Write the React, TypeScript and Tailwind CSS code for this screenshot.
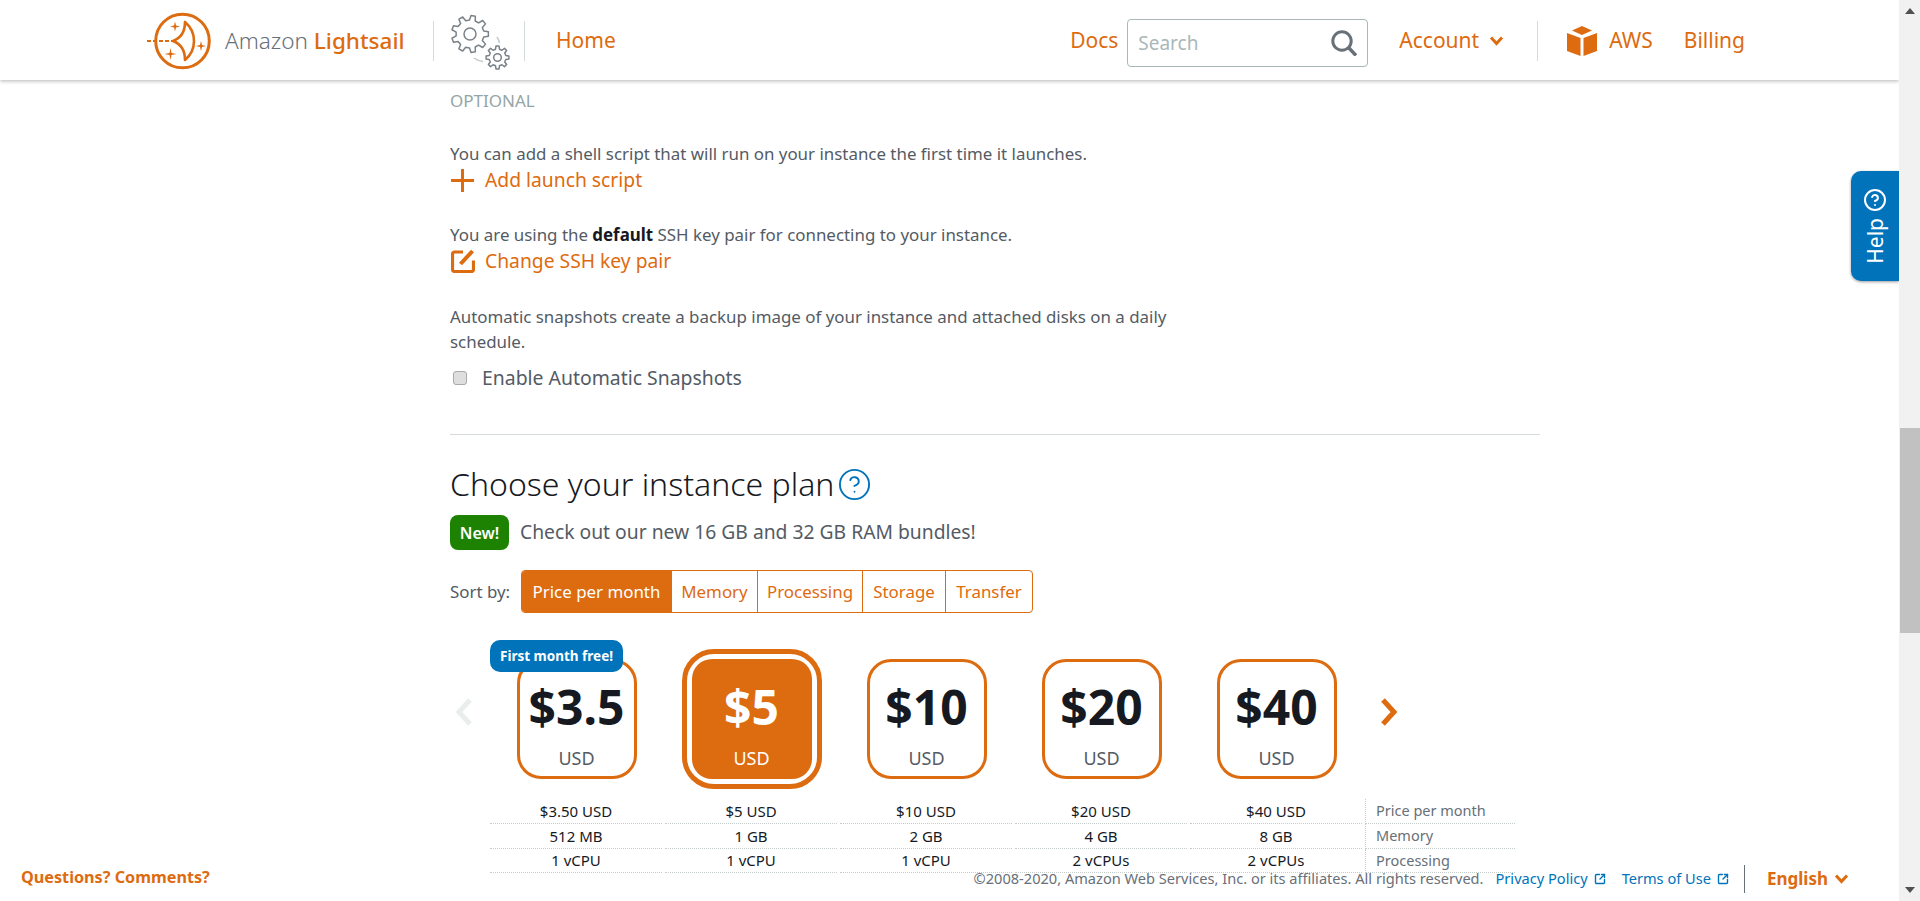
import { SquareArrowOutUpRight, CircleHelp } from 'lucide-react'

const sortTabs = [
  { label: 'Price per month', width: 'w-[150px]', active: true },
  { label: 'Memory', width: 'w-[86px]' },
  { label: 'Processing', width: 'w-[105px]' },
  { label: 'Storage', width: 'w-[83px]' },
  { label: 'Transfer', width: 'w-[86px]' },
]

const plans = [
  { price: '$3.5', monthly: '$3.50 USD', memory: '512 MB', cpu: '1 vCPU', badge: true },
  { price: '$5', monthly: '$5 USD', memory: '1 GB', cpu: '1 vCPU', selected: true },
  { price: '$10', monthly: '$10 USD', memory: '2 GB', cpu: '1 vCPU' },
  { price: '$20', monthly: '$20 USD', memory: '4 GB', cpu: '2 vCPUs' },
  { price: '$40', monthly: '$40 USD', memory: '8 GB', cpu: '2 vCPUs' },
]

// builds the outline of a cog, teeth are squared off
function gearPath(cx: number, cy: number, outer: number, inner: number, teeth: number) {
  const pts: string[] = []
  for (let i = 0; i < teeth; i++) {
    const step = (Math.PI * 2) / teeth
    const a = i * step
    const corners: [number, number][] = [
      [inner, a - step * 0.3],
      [outer, a - step * 0.17],
      [outer, a + step * 0.17],
      [inner, a + step * 0.3],
    ]
    corners.forEach(([r, t]) => {
      pts.push(`${(cx + r * Math.cos(t)).toFixed(2)} ${(cy + r * Math.sin(t)).toFixed(2)}`)
    })
  }
  return `M${pts.join('L')}Z`
}

const sparkle = (x: number, y: number, r: number) =>
  `M${x} ${y - r}L${x + 1} ${y - 1}L${x + r} ${y}L${x + 1} ${y + 1}L${x} ${y + r}L${x - 1} ${y + 1}L${x - r} ${y}L${x - 1} ${y - 1}Z`

function Logo() {
  return (
    <svg className="h-[60px] w-[66px] shrink-0" viewBox="0 0 66 60" fill="none" stroke="#dd6b10">
      <circle cx="35.500" cy="30" r="26.800" strokeWidth="3" />
      <path d="M0 30h26" strokeWidth="2" strokeDasharray="4 2" />
      <path d="M38 11C38 20 34 27 26 30C34 33 38 40 38 49C44 44 47 37 47 30C47 23 44 16 38 11Z" strokeWidth="2.600" strokeLinejoin="round" />
      <path d={sparkle(28, 15.500, 5)} fill="#dd6b10" stroke="none" />
      <path d={sparkle(54, 35, 5)} fill="#dd6b10" stroke="none" />
      <path d={sparkle(23.500, 43, 6)} fill="#dd6b10" stroke="none" />
    </svg>
  )
}

function Gears() {
  return (
    <svg className="h-[60px] w-[62px] shrink-0" viewBox="0 0 62 60" fill="none" stroke="#7a8288" strokeWidth="1.500" strokeLinejoin="round">
      <path d={gearPath(20, 23, 18.500, 14, 9)} />
      <circle cx="20" cy="23" r="6" />
      <path d={gearPath(47.500, 46.500, 11.500, 8.500, 8)} fill="#fff" />
      <circle cx="47.500" cy="46.500" r="3.800" />
      <path d="M24 47q4 3 9 3.500" stroke="#c4c9c9" />
      <path d="M47 26q2 3 2.500 6" stroke="#c4c9c9" />
    </svg>
  )
}

function Cube() {
  return (
    <svg className="h-[30px] w-[30px] shrink-0" viewBox="0 0 30 30" fill="#dd6b10">
      <path d="M15 0L25 4.500L15 9L5 4.500Z" />
      <path d="M0 7L13.500 12V30L0 25Z" />
      <path d="M30 7L16.500 12V30L30 25Z" />
    </svg>
  )
}

function Divider() {
  return <div className="h-10 w-px shrink-0 bg-[#d5dbdb]" />
}

function Chev({ className }: { className: string }) {
  return (
    <svg className={className} viewBox="0 0 15 10" fill="none" stroke="currentColor" strokeWidth="3">
      <path d="M2 1.500L7.500 7.500L13 1.500" />
    </svg>
  )
}

function PlanCard({ plan }: { plan: (typeof plans)[number] }) {
  return (
    <div className="relative flex h-[140px] w-[175px] shrink-0 items-center justify-center">
      {plan.selected ? (
        <div className="flex h-[140px] w-[140px] items-center justify-center rounded-[32px] border-[5px] border-[#dd6b10]">
          <div className="flex h-[120px] w-[120px] flex-col items-center rounded-[20px] bg-[#dd6b10] text-white">
            <span className="mt-[16px] text-[48px] leading-[64px] font-bold">{plan.price}</span>
            <span className="mt-[7px] text-[18px] leading-6">USD</span>
          </div>
        </div>
      ) : (
        <div className="flex h-[120px] w-[120px] flex-col items-center rounded-[24px] border-[3px] border-[#dd6b10]">
          <span className="mt-[13px] text-[48px] leading-[64px] font-bold text-[#16191f]">{plan.price}</span>
          <span className="mt-[7px] text-[18px] leading-6 text-[#545b64]">USD</span>
        </div>
      )}
      {plan.badge && (
        <div className="absolute top-[-9px] left-[1px] flex h-8 w-[133px] items-center justify-center rounded-[10px] bg-[#0073bb] text-[13.500px] font-bold text-white">
          First month free!
        </div>
      )}
    </div>
  )
}

function SpecRow({ values, label, height }: { values: string[]; label: string; height: string }) {
  return (
    <div className={`flex ${height}`}>
      {values.map((v, i) => (
        <div key={i} className="mr-[3px] flex w-[172px] items-center justify-center border-b border-dotted border-[#c5cccc] text-[15px] text-[#16191f]">
          {v}
        </div>
      ))}
      <div className="flex w-[150px] items-center border-b border-l border-dotted border-[#c5cccc] pl-[10px] text-[14.500px] text-[#687078]">
        {label}
      </div>
    </div>
  )
}

export default function App() {
  return (
    <div className="relative flex h-[901px] w-[1920px] overflow-hidden bg-white font-['Noto_Sans','Open_Sans',sans-serif] text-[16.900px] text-[#545b64]">
      <div className="flex min-w-0 flex-1 flex-col">
        <header className="z-10 flex h-20 shrink-0 items-center bg-white pt-[2px] pr-[154px] pl-[147px] text-[21px] text-[#dd6b10] shadow-[0_1px_4px_rgba(0,0,0,0.3)]">
          <Logo />
          <div className="ml-[12px] w-[178px] text-[22.500px] whitespace-nowrap">
            <span className="font-light text-[#687078]">Amazon </span>
            <span className="font-medium">Lightsail</span>
          </div>
          <div className="ml-[30px]"><Divider /></div>
          <div className="ml-[16px]"><Gears /></div>
          <div className="ml-[12px]"><Divider /></div>
          <span className="ml-[31px]">Home</span>
          <span className="ml-auto">Docs</span>
          <div className="mt-[4px] ml-[9px] flex h-12 w-[241px] items-center justify-between rounded-[4px] border border-[#aab7b8] pr-[10px] pl-[10px] text-[19px] text-[#aab7b8]">
            Search
            <svg className="h-[26px] w-[26px]" viewBox="0 0 26 26" fill="none" stroke="#687078">
              <circle cx="11" cy="11" r="9.200" strokeWidth="3" />
              <path d="M17.500 17.500L25 25.500" strokeWidth="3.500" />
            </svg>
          </div>
          <span className="ml-[31px]">Account</span>
          <Chev className="ml-[10px] h-[10px] w-[15px]" />
          <div className="ml-[33px]"><Divider /></div>
          <div className="ml-[29px]"><Cube /></div>
          <span className="ml-[12px]">AWS</span>
          <span className="ml-[31px]">Billing</span>
        </header>

        <main className="min-h-0 flex-1 overflow-hidden pt-[11px] pl-[450px]">
          <div className="h-5 text-[17px] leading-5 text-[#95a5a6]">OPTIONAL</div>
          <p className="mt-[31px] leading-6">You can add a shell script that will run on your instance the first time it launches.</p>
          <div className="mt-[1px] flex h-[26px] items-center text-[19.300px] text-[#dd6b10]">
            <svg className="mr-[11px] ml-px h-[23px] w-[23px]" viewBox="0 0 23 23" stroke="currentColor" strokeWidth="3">
              <path d="M11.500 0V23M0 11.500H23" />
            </svg>
            Add launch script
          </div>
          <p className="mt-[30px] leading-6">
            You are using the <strong className="font-bold text-[#16191f]">default</strong> SSH key pair for connecting to your instance.
          </p>
          <div className="mt-[1px] flex h-[26px] items-center text-[19.300px] text-[#dd6b10]">
            <svg className="mr-[10px] ml-px h-[24px] w-[24px]" viewBox="0 0 24 24" fill="none" stroke="currentColor" strokeWidth="3.200">
              <path d="M12 3H3.500a2 2 0 0 0-2 2V20.500a2 2 0 0 0 2 2h17a2 2 0 0 0 2-2v-9" />
              <path d="M9.500 15L21.500 2" strokeWidth="4" />
            </svg>
            Change SSH key pair
          </div>
          <p className="mt-[30px] w-[740px] leading-[25px]">
            Automatic snapshots create a backup image of your instance and attached disks on a daily schedule.
          </p>
          <label className="mt-[11px] flex h-[26px] items-center text-[19.400px]">
            <input type="checkbox" className="mr-[15px] ml-[3px] h-[14px] w-[14px] appearance-none rounded-[3px] border border-[#a9a9a9] bg-[#dedede]" />
            Enable Automatic Snapshots
          </label>

          <div className="mt-[43px] h-px w-[1090px] bg-[#d5dbdb]" />

          <div className="mt-[25px] flex h-12 items-center">
            <h2 className="text-[32px] font-light text-[#16191f]">Choose your instance plan</h2>
            <CircleHelp className="ml-[3px] h-[35px] w-[35px] text-[#0073bb]" strokeWidth={1.300} />
          </div>
          <div className="mt-[7px] flex h-[35px] items-center text-[19.300px]">
            <span className="flex h-[35px] w-[59px] items-center justify-center rounded-[8px] bg-[#1d8102] text-[16px] font-semibold text-white">New!</span>
            <span className="ml-[11px]">Check out our new 16 GB and 32 GB RAM bundles!</span>
          </div>
          <div className="mt-[20px] flex h-[43px] items-center">
            <span className="w-[71px]">Sort by:</span>
            <div className="flex h-[43px] overflow-hidden rounded-[4px] border border-[#dd6b10] text-[#dd6b10]">
              {sortTabs.map((t) => (
                <div
                  key={t.label}
                  className={`flex items-center justify-center border-r border-[#dd6b10] last:border-r-0 ${t.width} ${t.active ? 'bg-[#dd6b10] text-white' : ''}`}
                >
                  {t.label}
                </div>
              ))}
            </div>
          </div>

          <div className="mt-[36px] flex h-[140px] items-center">
            <svg className="-mt-[14px] ml-[5px] h-[28px] w-[19px] shrink-0" viewBox="0 0 19 28" fill="none" stroke="#eaeded" strokeWidth="5">
              <path d="M15 2L4 14L15 26" />
            </svg>
            <div className="ml-[15px] flex">
              {plans.map((p) => (
                <PlanCard key={p.price} plan={p} />
              ))}
            </div>
            <svg className="-mt-[14px] ml-[15px] h-[28px] w-[19px] shrink-0" viewBox="0 0 19 28" fill="none" stroke="#dd6b10" strokeWidth="5">
              <path d="M4 2L15 14L4 26" />
            </svg>
          </div>

          <div className="mt-[10px] ml-[40px]">
            <SpecRow values={plans.map((p) => p.monthly)} label="Price per month" height="h-[25px]" />
            <SpecRow values={plans.map((p) => p.memory)} label="Memory" height="h-[25px]" />
            <SpecRow values={plans.map((p) => p.cpu)} label="Processing" height="h-[24px]" />
          </div>
        </main>
      </div>

      {/* scrollbar */}
      <div className="relative z-10 flex h-full w-[21px] shrink-0 flex-col items-center justify-between bg-[#f1f1f1] py-[8px]">
        <div className="h-0 w-0 border-x-[5px] border-b-[6px] border-x-transparent border-b-[#505050]" />
        <div className="absolute top-[428px] left-[1px] h-[205px] w-[20px] bg-[#c1c1c1]" />
        <div className="h-0 w-0 border-x-[5px] border-t-[6px] border-x-transparent border-t-[#505050]" />
      </div>

      {/* help tab hangs over the content */}
      <div className="absolute top-[171px] right-[21px] flex h-[110px] w-[48px] flex-col items-center justify-center gap-[6px] rounded-l-[10px] bg-[#0073bb] text-white shadow-[0_1px_3px_rgba(0,0,0,0.4)]">
        <CircleHelp className="h-[24px] w-[24px]" strokeWidth={2} />
        <span className="rotate-180 text-[21px] leading-5 [writing-mode:vertical-rl]">Help</span>
      </div>

      <footer className="absolute right-[21px] bottom-0 left-0 flex h-[44px] items-center pr-[50px] pl-[21px] text-[14.600px] text-[#687078]">
        <span className="-mt-[4px] text-[16.200px] font-bold text-[#dd6b10]">Questions? Comments?</span>
        <span className="ml-auto">©2008-2020, Amazon Web Services, Inc. or its affiliates. All rights reserved.</span>
        <span className="ml-[12px] flex items-center text-[#0073bb]">Privacy Policy<SquareArrowOutUpRight className="ml-[6px] h-3 w-3" strokeWidth={2.800} /></span>
        <span className="ml-[16px] flex items-center text-[#0073bb]">Terms of Use<SquareArrowOutUpRight className="ml-[6px] h-3 w-3" strokeWidth={2.800} /></span>
        <div className="ml-[15px] h-[28px] w-px bg-[#687078]" />
        <span className="ml-[22px] text-[17px] font-bold text-[#dd6b10]">English</span>
        <Chev className="ml-[6px] h-[10px] w-[15px] text-[#dd6b10]" />
      </footer>
    </div>
  )
}
